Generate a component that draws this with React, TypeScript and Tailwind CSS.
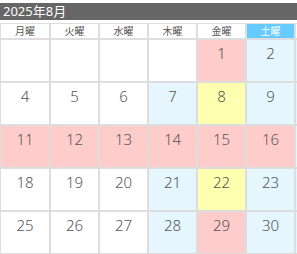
type Tone = 'white' | 'pink' | 'blue' | 'yellow';

interface Cell {
  day?: number;
  tone: Tone;
}

const toneClass: Record<Tone, string> = {
  white: 'bg-white',
  pink: 'bg-[#ffcccc]',
  blue: 'bg-[#e6f6ff]',
  yellow: 'bg-[#ffffb0]',
};

// Sunday is past the right edge of the frame, only its border shows
const weekdays = ['月曜', '火曜', '水曜', '木曜', '金曜', '土曜', ''];

const weeks: Cell[][] = [
  [
    { tone: 'white' },
    { tone: 'white' },
    { tone: 'white' },
    { tone: 'white' },
    { day: 1, tone: 'pink' },
    { day: 2, tone: 'blue' },
    { tone: 'blue' },
  ],
  [
    { day: 4, tone: 'white' },
    { day: 5, tone: 'white' },
    { day: 6, tone: 'white' },
    { day: 7, tone: 'blue' },
    { day: 8, tone: 'yellow' },
    { day: 9, tone: 'blue' },
    { tone: 'blue' },
  ],
  [
    { day: 11, tone: 'pink' },
    { day: 12, tone: 'pink' },
    { day: 13, tone: 'pink' },
    { day: 14, tone: 'pink' },
    { day: 15, tone: 'pink' },
    { day: 16, tone: 'pink' },
    { tone: 'blue' },
  ],
  [
    { day: 18, tone: 'white' },
    { day: 19, tone: 'white' },
    { day: 20, tone: 'white' },
    { day: 21, tone: 'blue' },
    { day: 22, tone: 'yellow' },
    { day: 23, tone: 'blue' },
    { tone: 'blue' },
  ],
  [
    { day: 25, tone: 'white' },
    { day: 26, tone: 'white' },
    { day: 27, tone: 'white' },
    { day: 28, tone: 'blue' },
    { day: 29, tone: 'pink' },
    { day: 30, tone: 'blue' },
    { tone: 'blue' },
  ],
];

export default function App() {
  return (
    <div className="h-[254px] w-[297px] overflow-hidden bg-white pt-[3px] font-['Noto_Sans','Noto_Sans_CJK_JP',sans-serif]">
      <div className="flex h-[17px] items-center bg-[#666666] pl-[3px] text-[13px] leading-none text-white">
        2025年8月
      </div>
      <div className="mt-[3px] grid w-[344px] grid-cols-[48px_repeat(6,47px)] grid-rows-[14px_repeat(5,41px)] gap-[2px] bg-[#dddddd] p-[1px]">
        {weekdays.map((name, i) => (
          <div
            key={i}
            className={`flex items-center justify-center text-[10px] leading-none ${
              name === '土曜' ? 'bg-[#66ccff] text-white' : 'bg-white text-[#555555]'
            }`}
          >
            {name}
          </div>
        ))}
        {weeks.flat().map((cell, i) => (
          <div
            key={i}
            className={`flex justify-center pt-[6px] text-[15px] leading-none font-light text-[#555555] ${toneClass[cell.tone]}`}
          >
            {cell.day}
          </div>
        ))}
      </div>
    </div>
  );
}
